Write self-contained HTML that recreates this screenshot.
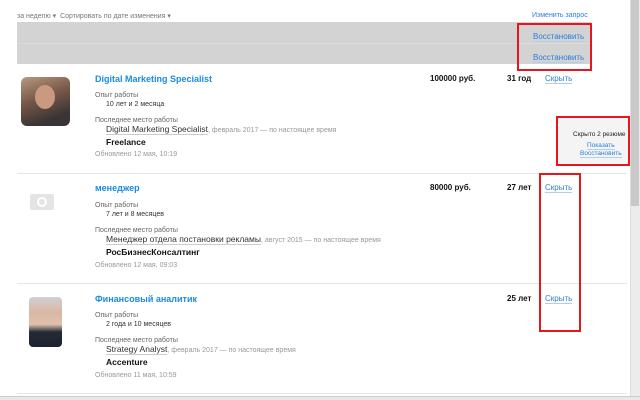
<!DOCTYPE html>
<html><head><meta charset="utf-8"><style>
*{margin:0;padding:0;box-sizing:border-box}
body{width:640px;height:400px;overflow:hidden;background:#fff;font-family:"Liberation Sans",sans-serif;position:relative;font-size:8px;color:#333}
.a{position:absolute;white-space:nowrap}
.link{color:#2b7de0}
.u{border-bottom:1px solid #b6cde8}
.t{color:#1a8be6;font-weight:bold;font-size:9px}
.g{color:#666;font-size:7px}
.s{color:#999;font-size:7px}
.j{color:#333;font-size:8.5px;border-bottom:1px solid #ccc}
.b{font-weight:bold;color:#111;font-size:8.5px}
.red{position:absolute;border:2px solid #e8161c}
.hr{position:absolute;left:17px;width:610px;height:1px;background:#e6e6e6}
</style></head><body>
<div class="a g" style="left:17px;top:12px;color:#777">за неделю ▾ &nbsp;Сортировать по дате изменения ▾</div>
<div class="a link" style="left:532px;top:12px;font-size:7px">Изменить запрос</div>
<div class="a" style="left:17px;top:22px;width:574px;height:42px;background:#d3d3d3"></div>
<div class="a" style="left:17px;top:43px;width:574px;height:1px;background:#dcdcdc"></div>
<div class="a link u" style="left:533px;top:32px;font-size:8px">Восстановить</div>
<div class="a link u" style="left:533px;top:53px;font-size:8px">Восстановить</div>
<div class="red" style="left:517px;top:23px;width:75px;height:48px"></div>

<div class="a" style="left:21px;top:77px;width:49px;height:49px;border-radius:6px;background:linear-gradient(160deg,#b89a80,#7a5a4a 40%,#3a3434 80%)"><div style="position:absolute;left:14px;top:8px;width:20px;height:24px;border-radius:50%;background:#c99a80"></div></div>
<div class="a t" style="left:95px;top:74px">Digital Marketing Specialist</div>
<div class="a b" style="left:430px;top:74px;font-size:8px">100000 руб.</div>
<div class="a b" style="left:507px;top:74px;font-size:8px">31 год</div>
<div class="a link u" style="left:545px;top:74px;font-size:8px">Скрыть</div>
<div class="a g" style="left:95px;top:92px">Опыт работы</div>
<div class="a" style="left:106px;top:101px;font-size:7px">10 лет и 2 месяца</div>
<div class="a g" style="left:95px;top:117px">Последнее место работы</div>
<div class="a" style="left:106px;top:124px"><span class="j">Digital Marketing Specialist</span><span class="s">, февраль 2017 — по настоящее время</span></div>
<div class="a b" style="left:106px;top:137px">Freelance</div>
<div class="a s" style="left:95px;top:151px">Обновлено 12 мая, 10:19</div>
<div class="a" style="left:558px;top:118px;width:70px;height:45px;background:#f4f4f4"></div>
<div class="a" style="left:573px;top:131px;font-size:6.5px;color:#222">Скрыто 2 резюме</div>
<div class="a link u" style="left:587px;top:142px;font-size:6.5px">Показать</div>
<div class="a link u" style="left:580px;top:150px;font-size:6.5px">Восстановить</div>
<div class="red" style="left:556px;top:116px;width:74px;height:50px"></div>

<div class="hr" style="top:173px"></div>
<div class="a" style="left:30px;top:194px;width:24px;height:16px;border-radius:2px;background:#e4e4e4"><div style="position:absolute;left:7px;top:3px;width:10px;height:10px;border-radius:50%;border:2px solid #fff"></div></div>
<div class="a t" style="left:95px;top:183px">менеджер</div>
<div class="a b" style="left:430px;top:183px;font-size:8px">80000 руб.</div>
<div class="a b" style="left:507px;top:183px;font-size:8px">27 лет</div>
<div class="a link u" style="left:545px;top:183px;font-size:8px">Скрыть</div>
<div class="a g" style="left:95px;top:202px">Опыт работы</div>
<div class="a" style="left:106px;top:211px;font-size:7px">7 лет и 8 месяцев</div>
<div class="a g" style="left:95px;top:227px">Последнее место работы</div>
<div class="a" style="left:106px;top:234px"><span class="j">Менеджер отдела постановки рекламы</span><span class="s">, август 2015 — по настоящее время</span></div>
<div class="a b" style="left:106px;top:247px">РосБизнесКонсалтинг</div>
<div class="a s" style="left:95px;top:262px">Обновлено 12 мая, 09:03</div>

<div class="hr" style="top:283px"></div>
<div class="a" style="left:29px;top:297px;width:33px;height:50px;border-radius:4px;background:linear-gradient(180deg,#cfd0d2 0%,#d8b8a4 30%,#e0c0aa 55%,#242a36 70%,#1d2230 100%)"></div>
<div class="a t" style="left:95px;top:294px">Финансовый аналитик</div>
<div class="a b" style="left:507px;top:294px;font-size:8px">25 лет</div>
<div class="a link u" style="left:545px;top:294px;font-size:8px">Скрыть</div>
<div class="a g" style="left:95px;top:312px">Опыт работы</div>
<div class="a" style="left:106px;top:321px;font-size:7px">2 года и 10 месяцев</div>
<div class="a g" style="left:95px;top:337px">Последнее место работы</div>
<div class="a" style="left:106px;top:344px"><span class="j">Strategy Analyst</span><span class="s">, февраль 2017 — по настоящее время</span></div>
<div class="a b" style="left:106px;top:357px">Accenture</div>
<div class="a s" style="left:95px;top:372px">Обновлено 11 мая, 10:59</div>
<div class="red" style="left:539px;top:173px;width:42px;height:159px"></div>
<div class="hr" style="top:393px"></div>

<div class="a" style="left:630px;top:0;width:10px;height:396px;background:#ececec;border-left:1px solid #ddd"></div>
<div class="a" style="left:631px;top:0;width:8px;height:206px;background:#c8c8c8"></div>
<div class="a" style="left:0;top:396px;width:640px;height:4px;background:#e8e8e8;border-top:1px solid #ccc"></div>
</body></html>
